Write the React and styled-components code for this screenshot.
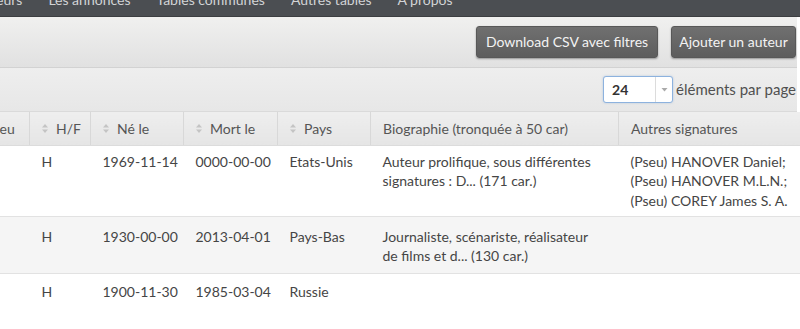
import React from "react";
import styled, { createGlobalStyle } from "styled-components";

const GlobalStyle = createGlobalStyle`
  html, body { margin: 0; padding: 0; background: #fff; overflow: hidden; }
  body { font-family: Lato, "Open Sans", Arial, sans-serif; }
`;

const Page = styled.div`
  width: 800px;
  height: 329px;
  overflow: hidden;
  background: #fff;
`;

const NavBar = styled.nav`
  height: 16px;
  background: #4b4e52;
  border-bottom: 1px solid #3c3e41;
  overflow: hidden;
  display: flex;
  align-items: flex-start;
`;

const NavList = styled.ul`
  list-style: none;
  margin: -10px 0 0 -26px;
  padding: 0;
  display: flex;
  gap: 26px;
`;

const NavItem = styled.li`
  color: #d2d4d6;
  font-size: 14px;
  line-height: 20px;
  white-space: nowrap;
`;

const Toolbar = styled.div`
  height: 51px;
  width: 797px;
  box-sizing: border-box;
  display: flex;
  justify-content: flex-end;
  align-items: center;
  gap: 13px;
  padding: 0 1px 1px 0;
  background: linear-gradient(#f0f0ef, #e1e1e1);
  border-bottom: 1px solid #d2d2d2;
`;

const Button = styled.button`
  height: 32px;
  width: ${(p) => p.$w}px;
  box-sizing: border-box;
  padding: 0;
  border: 1px solid #585858;
  border-radius: 3px;
  background: linear-gradient(#707070, #5d5d5d);
  color: #f3f3f3;
  font-family: inherit;
  font-size: 14px;
  box-shadow: 0 1px 2px rgba(0, 0, 0, 0.35);
`;

const PagerBar = styled.div`
  height: 44px;
  width: 797px;
  box-sizing: border-box;
  display: flex;
  justify-content: flex-end;
  align-items: center;
  gap: 3px;
  padding: 0 1px 1px 0;
  background: linear-gradient(#eeeeee, #e7e7e7);
  border-bottom: 1px solid #dadada;
`;

const Select = styled.div`
  width: 70px;
  height: 27px;
  box-sizing: border-box;
  display: flex;
  border: 1px solid #8db2de;
  border-radius: 3px;
  background: #fff;
  box-shadow: 0 0 2px rgba(120, 160, 210, 0.5);
`;

const SelectValue = styled.span`
  flex: 1;
  padding-left: 8px;
  font-size: 14px;
  font-weight: 700;
  color: #333;
  line-height: 25px;
`;

const SelectArrow = styled.span`
  width: 16px;
  border-left: 1px solid #dcdcdc;
  display: flex;
  align-items: center;
  justify-content: center;
`;

const PagerLabel = styled.span`
  font-size: 15px;
  color: #505050;
`;

const Table = styled.table`
  border-collapse: collapse;
  table-layout: fixed;
  width: 824px;
  margin-left: -24px;
  font-size: 14px;
  color: #444;
`;

const Th = styled.th`
  height: 33px;
  padding: 0 12px;
  text-align: left;
  font-weight: 400;
  font-size: 14px;
  color: #555;
  white-space: nowrap;
  background: linear-gradient(#eeeeee, #e5e5e5);
  border-right: 1px solid #d8d8d8;
  border-left: 1px solid #f6f6f6;
  border-bottom: 1px solid #dcdcdc;
  box-sizing: border-box;
`;

const ThInner = styled.span`
  display: inline-flex;
  align-items: center;
  gap: 8px;
`;

const Tr = styled.tr`
  height: ${(p) => p.$h}px;
  background: ${(p) => (p.$alt ? "#f5f5f5" : "#fff")};
  border-top: 1px solid #e2e2e2;
`;

const Td = styled.td`
  padding: ${(p) => p.$pt}px 12px 0;
  vertical-align: top;
  line-height: 19.5px;
  color: #454545;
  white-space: nowrap;
  overflow: hidden;
`;

const SortIcon = () => (
  <svg width="6" height="9" viewBox="0 0 6 9">
    <path d="M3 0 L6 3.5 L0 3.5 Z" fill="#c4c4c4" />
    <path d="M3 9 L6 5.5 L0 5.5 Z" fill="#c4c4c4" />
  </svg>
);

const Arrow = () => (
  <svg width="7" height="5" viewBox="0 0 7 5">
    <path d="M0.5 1 L6.5 1 L3.5 4.5 Z" fill="#aaa" />
  </svg>
);

const columns = [
  { label: "Lieu", w: 53, sort: false },
  { label: "H/F", w: 61, sort: true },
  { label: "Né le", w: 93, sort: true },
  { label: "Mort le", w: 94, sort: true },
  { label: "Pays", w: 93, sort: true },
  { label: "Biographie (tronquée à 50 car)", w: 248, sort: false },
  { label: "Autres signatures", w: 182, sort: false },
];

const rows = [
  {
    h: 71,
    pt: 6,
    cells: [
      "",
      "H",
      "1969-11-14",
      "0000-00-00",
      "Etats-Unis",
      ["Auteur prolifique, sous différentes", "signatures : D... (171 car.)"],
      ["(Pseu) HANOVER Daniel;", "(Pseu) HANOVER M.L.N.;", "(Pseu) COREY James S. A."],
    ],
  },
  {
    h: 57,
    pt: 10,
    alt: true,
    cells: [
      "",
      "H",
      "1930-00-00",
      "2013-04-01",
      "Pays-Bas",
      ["Journaliste, scénariste, réalisateur", "de films et d... (130 car.)"],
      "",
    ],
  },
  {
    h: 56,
    pt: 8,
    cells: ["", "H", "1900-11-30", "1985-03-04", "Russie", "", ""],
  },
];

const renderCell = (c) =>
  Array.isArray(c)
    ? c.map((line, i) => (
        <React.Fragment key={i}>
          {line}
          {i < c.length - 1 && <br />}
        </React.Fragment>
      ))
    : c;

export default function App() {
  return (
    <Page>
      <GlobalStyle />
      <NavBar>
        <NavList>
          <NavItem>Auteurs</NavItem>
          <NavItem>Les annonces</NavItem>
          <NavItem>Tables communes</NavItem>
          <NavItem>Autres tables</NavItem>
          <NavItem>A propos</NavItem>
        </NavList>
      </NavBar>
      <Toolbar>
        <Button $w={182}>Download CSV avec filtres</Button>
        <Button $w={125}>Ajouter un auteur</Button>
      </Toolbar>
      <PagerBar>
        <Select>
          <SelectValue>24</SelectValue>
          <SelectArrow>
            <Arrow />
          </SelectArrow>
        </Select>
        <PagerLabel>éléments par page</PagerLabel>
      </PagerBar>
      <Table>
        <colgroup>
          {columns.map((c, i) => (
            <col key={i} style={{ width: c.w }} />
          ))}
        </colgroup>
        <thead>
          <tr>
            {columns.map((c, i) => (
              <Th key={i}>
                <ThInner>
                  {c.sort && <SortIcon />}
                  {c.label}
                </ThInner>
              </Th>
            ))}
          </tr>
        </thead>
        <tbody>
          {rows.map((r, i) => (
            <Tr key={i} $h={r.h} $alt={r.alt}>
              {r.cells.map((c, j) => (
                <Td key={j} $pt={r.pt}>
                  {renderCell(c)}
                </Td>
              ))}
            </Tr>
          ))}
        </tbody>
      </Table>
    </Page>
  );
}
